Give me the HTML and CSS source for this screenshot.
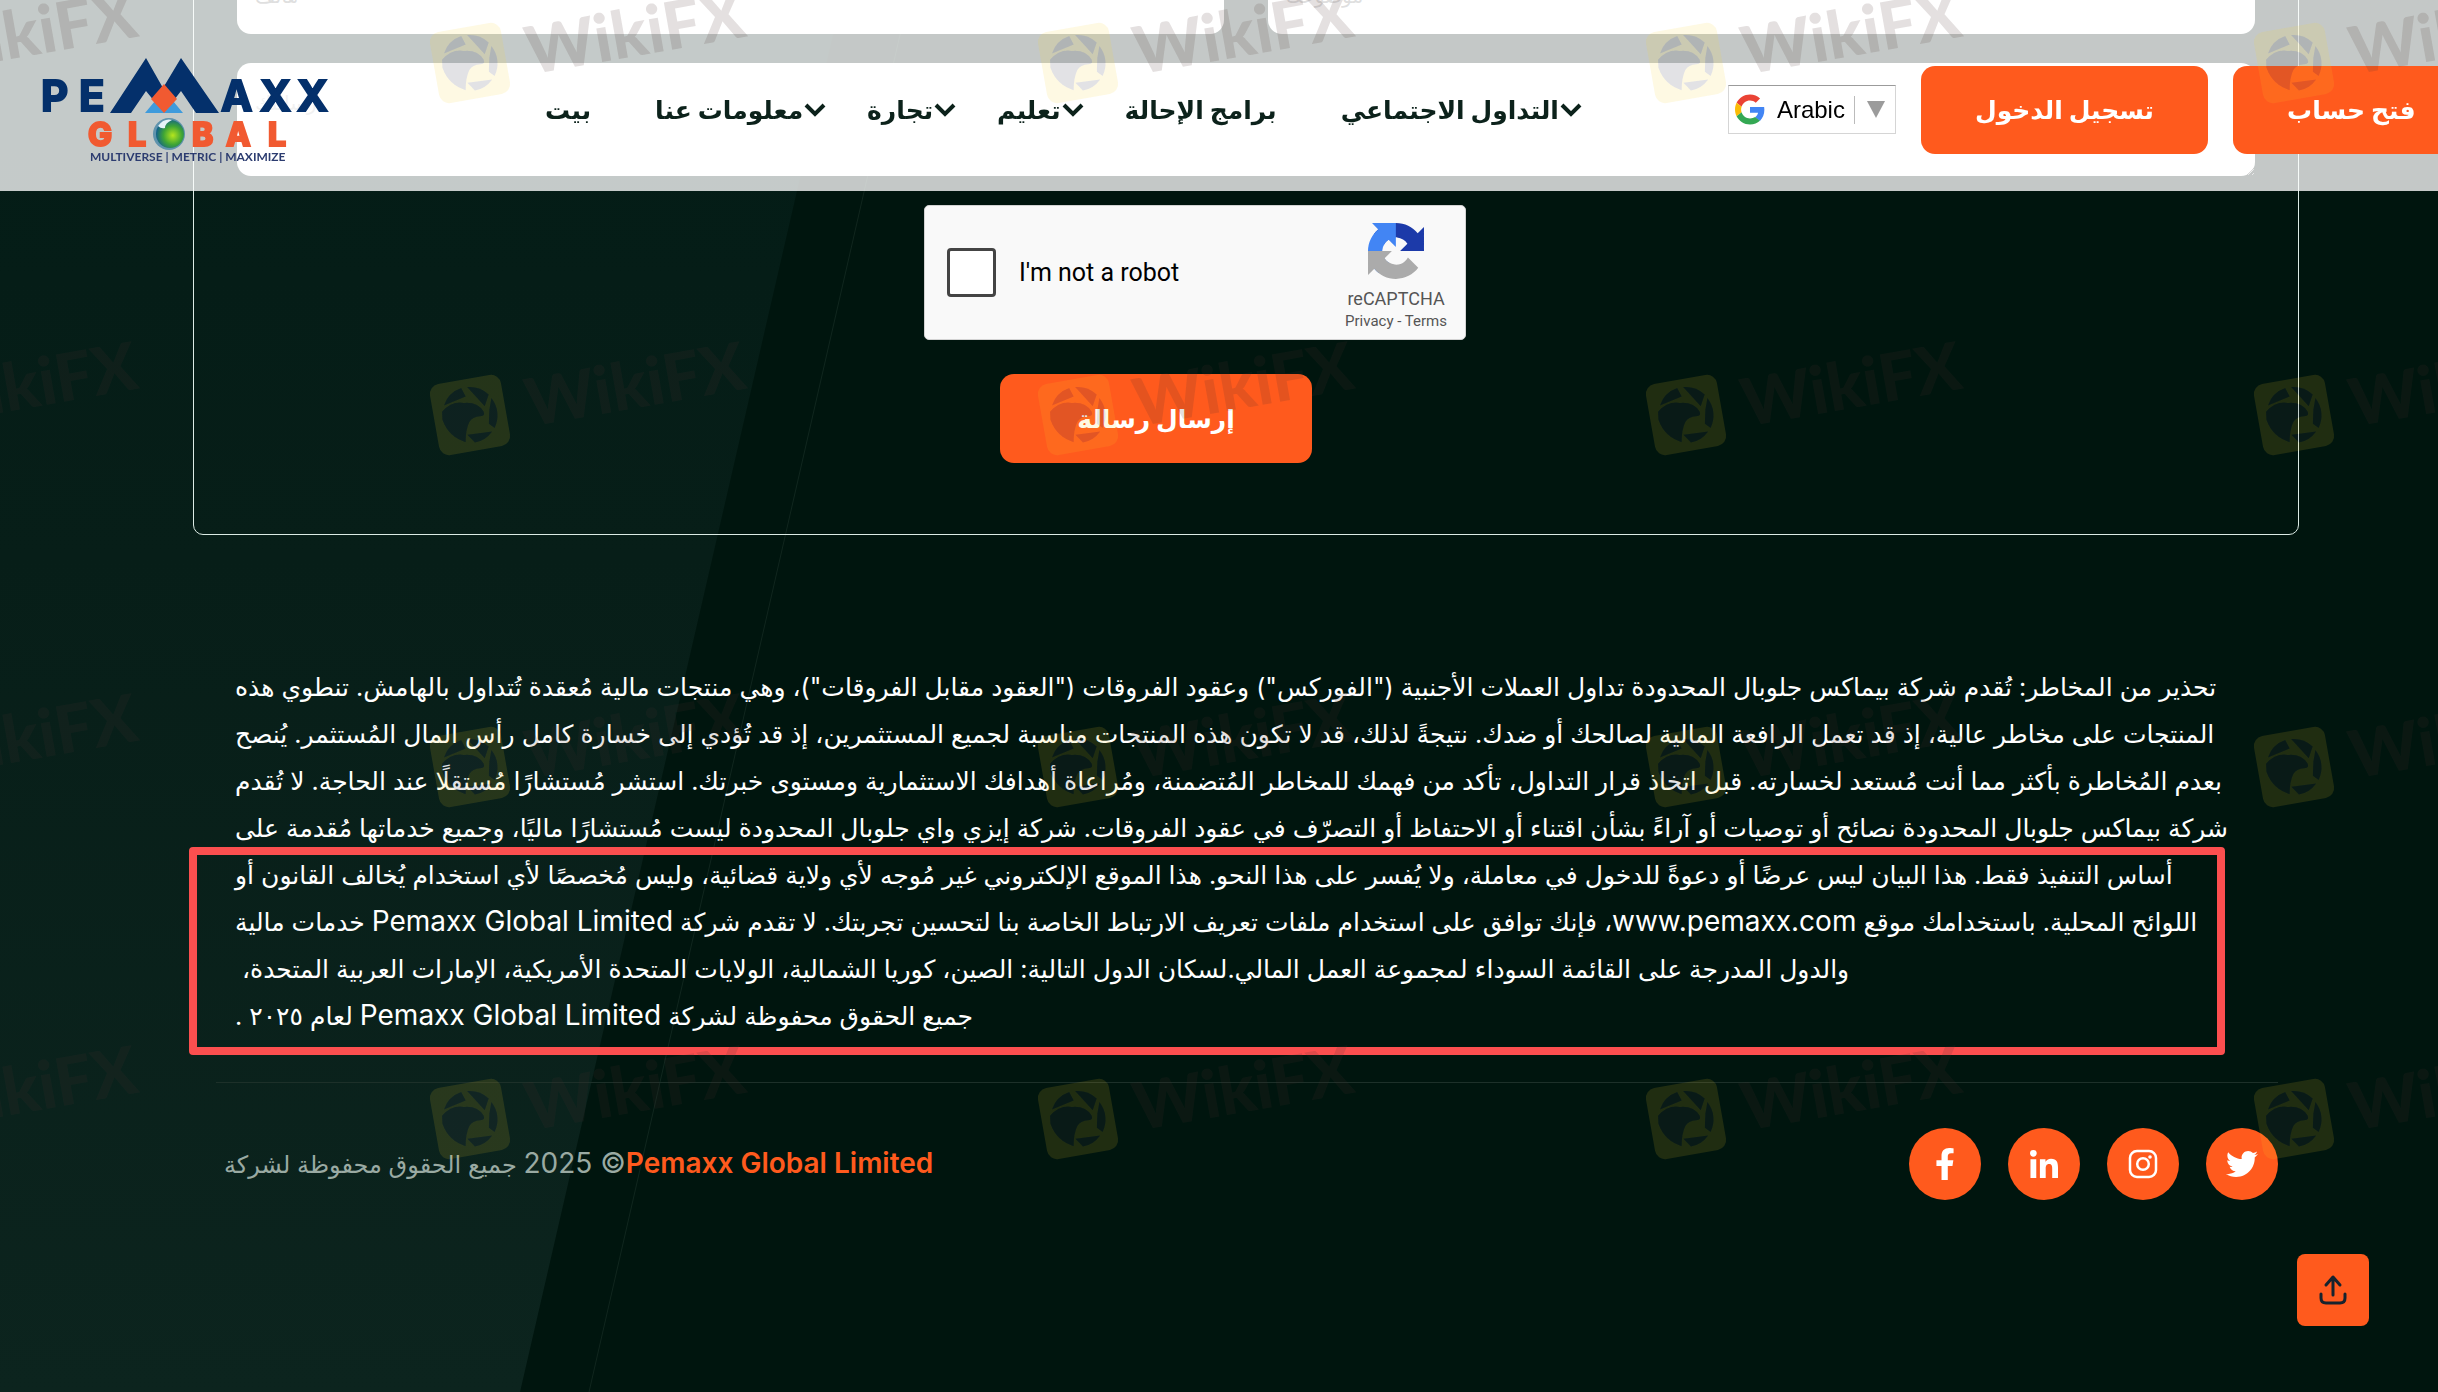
FILE: index.html
```
<!DOCTYPE html>
<html lang="ar">
<head>
  <meta charset="UTF-8" />
  <meta name="viewport" content="width=device-width, initial-scale=1.0" />
  <title>Pemaxx Global Limited</title>
  <link rel="stylesheet" href="styles.css">
</head>
<body>
  <svg class="page-bg" viewBox="0 0 2438 1392" preserveAspectRatio="none" aria-hidden="true">
    <defs>
      <linearGradient id="panel" x1="0" y1="0" x2="0" y2="1">
        <stop offset="0" stop-color="#031c16" />
        <stop offset="0.4" stop-color="#071e18" />
        <stop offset="1" stop-color="#0c241e" />
      </linearGradient>
    </defs>
    <path fill="url(#panel)" d="M0 0H841L520 1392H0Z" />
    <path fill="none" stroke="#10261e" stroke-width="1" d="M908 0L589 1392" />
  </svg>

  <header class="header">
    <a href="#" class="logo" aria-label="Pemaxx Global">
      <svg width="296" height="115" viewBox="0 0 296 115">
        <defs>
          <radialGradient id="globe" cx="0.6" cy="0.55" r="0.6">
            <stop offset="0" stop-color="#b5e61d" />
            <stop offset="0.55" stop-color="#3fa535" />
            <stop offset="1" stop-color="#12618a" />
          </radialGradient>
        </defs>
        <g class="logo-name">
          <text x="5 43" y="59">PE</text>
          <text x="185 224 261" y="59">AXX</text>
        </g>
        <path fill="#04306b" d="M74 61L110 6L127 36L145 6L183 61H160L145 39L128 61L110 39L95 61Z" />
        <path fill="#3f9bdc" d="M109 61L119 49L128 61L137 49L147 61Z" />
        <path fill="#f15a31" d="M128 32L141 47L128 61L115 47Z" />
        <g class="logo-global">
          <text x="52 92" y="94">GL</text>
          <text x="156 190 232" y="94">BAL</text>
        </g>
        <circle cx="133" cy="82" r="16" fill="#5f93ad" />
        <circle cx="134" cy="82" r="14" fill="url(#globe)" />
        <path fill="#e6f3f8" d="M122 74q6-8 14-6q-7 3-7 8q-4 1-7-2z" />
        <text class="logo-tag" x="54" y="109">MULTIVERSE | METRIC | MAXIMIZE</text>
      </svg>
    </a>

    <nav class="nav">
      <a href="#" class="nav-single">بيت</a>
      <a href="#">معلومات عنا<svg viewBox="0 0 24 14"><path d="M3 2l9 9 9-9" /></svg></a>
      <a href="#">تجارة<svg viewBox="0 0 24 14"><path d="M3 2l9 9 9-9" /></svg></a>
      <a href="#">تعليم<svg viewBox="0 0 24 14"><path d="M3 2l9 9 9-9" /></svg></a>
      <a href="#" class="nav-single">برامج الإحالة</a>
      <a href="#">التداول الاجتماعي<svg viewBox="0 0 24 14"><path d="M3 2l9 9 9-9" /></svg></a>
    </nav>

    <div class="actions">
      <button type="button" class="lang">
        <svg width="30" height="31" viewBox="0 0 48 48">
          <path fill="#ea4335" d="M24 9.500c3.540 0 6.710 1.220 9.210 3.600l6.850-6.850C35.900 2.380 30.470 0 24 0 14.620 0 6.510 5.380 2.560 13.220l7.980 6.190C12.430 13.720 17.740 9.500 24 9.500z" />
          <path fill="#4285f4" d="M46.980 24.550c0-1.570-.15-3.090-.38-4.550H24v9.020h12.940c-.58 2.960-2.260 5.480-4.780 7.180l7.730 6c4.510-4.180 7.090-10.360 7.090-17.650z" />
          <path fill="#fbbc05" d="M10.530 28.590c-.48-1.450-.76-2.990-.76-4.590s.27-3.140.76-4.590l-7.980-6.190C.92 16.460 0 20.120 0 24s.92 7.540 2.560 10.780l7.970-6.190z" />
          <path fill="#34a853" d="M24 48c6.480 0 11.930-2.130 15.890-5.810l-7.730-6c-2.150 1.450-4.920 2.300-8.160 2.300-6.260 0-11.570-4.220-13.470-9.910l-7.980 6.190C6.510 42.620 14.620 48 24 48z" />
        </svg>
        <span class="lang-name">Arabic</span>
        <span class="lang-arrow"></span>
      </button>
      <a href="#" class="btn">تسجيل الدخول</a>
      <a href="#" class="btn">فتح حساب</a>
    </div>
  </header>

  <main class="main">
    <form class="contact">
      <div class="row">
        <input type="text" placeholder="هاتف" aria-label="هاتف" />
        <input type="text" placeholder="موضوعك" aria-label="موضوعك" />
      </div>
      <textarea placeholder="رسالتك" aria-label="رسالتك"></textarea>

      <div class="submit-area">
        <div class="captcha">
          <input type="checkbox" id="robot" />
          <label for="robot">I'm not a robot</label>
          <div class="captcha-brand">
            <svg width="56" height="56" viewBox="0 0 64 64">
              <path fill="#1c3aa9" d="M64 31.955l-.033-1.370V4.687l-7.160 7.160C50.948 4.674 42.033.093 32.050.093c-10.400 0-19.622 4.960-25.458 12.640l11.736 11.860a15.550 15.550 0 0 1 4.754-5.334c2.050-1.600 4.952-2.906 8.968-2.906.485 0 .860.057 1.135.163 4.976.393 9.288 3.140 11.828 7.124l-8.307 8.307L64 31.953" />
              <path fill="#4285f4" d="M31.862.094l-1.370.033H4.594l7.160 7.160C4.580 13.147 0 22.060 0 32.046c0 10.400 4.960 19.622 12.640 25.458L24.500 45.768a15.550 15.550 0 0 1-5.334-4.754c-1.600-2.050-2.906-4.952-2.906-8.968 0-.485.057-.860.163-1.135.393-4.976 3.140-9.288 7.124-11.828l8.307 8.307L31.860.095" />
              <path fill="#ababab" d="M.001 32.045l.033 1.370v25.898l7.160-7.160c5.860 7.173 14.774 11.754 24.760 11.754 10.400 0 19.622-4.960 25.458-12.640l-11.736-11.860a15.550 15.550 0 0 1-4.754 5.334c-2.050 1.600-4.952 2.906-8.968 2.906-.485 0-.860-.057-1.135-.163-4.976-.393-9.288-3.140-11.828-7.124l8.307-8.307c-10.522.040-22.400.066-27.295-.005" />
            </svg>
            <span class="captcha-name">reCAPTCHA</span>
            <span class="captcha-links"><a href="#">Privacy</a> - <a href="#">Terms</a></span>
          </div>
        </div>
        <button type="submit" class="btn btn-submit">إرسال رسالة</button>
      </div>
    </form>

    <footer class="footer">
      <div class="risk">
        <p dir="rtl">
          تحذير من المخاطر: تُقدم شركة بيماكس جلوبال المحدودة تداول العملات الأجنبية ("الفوركس") وعقود الفروقات ("العقود مقابل الفروقات")، وهي منتجات مالية مُعقدة تُتداول بالهامش. تنطوي هذه<br>
          المنتجات على مخاطر عالية، إذ قد تعمل الرافعة المالية لصالحك أو ضدك. نتيجةً لذلك، قد لا تكون هذه المنتجات مناسبة لجميع المستثمرين، إذ قد تُؤدي إلى خسارة كامل رأس المال المُستثمر. يُنصح<br>
          بعدم المُخاطرة بأكثر مما أنت مُستعد لخسارته. قبل اتخاذ قرار التداول، تأكد من فهمك للمخاطر المُتضمنة، ومُراعاة أهدافك الاستثمارية ومستوى خبرتك. استشر مُستشارًا مُستقلًا عند الحاجة. لا تُقدم<br>
          شركة بيماكس جلوبال المحدودة نصائح أو توصيات أو آراءً بشأن اقتناء أو الاحتفاظ أو التصرّف في عقود الفروقات. شركة إيزي واي جلوبال المحدودة ليست مُستشارًا ماليًا، وجميع خدماتها مُقدمة على<br>
          أساس التنفيذ فقط. هذا البيان ليس عرضًا أو دعوةً للدخول في معاملة، ولا يُفسر على هذا النحو. هذا الموقع الإلكتروني غير مُوجه لأي ولاية قضائية، وليس مُخصصًا لأي استخدام يُخالف القانون أو<br>
          اللوائح المحلية. باستخدامك موقع <span class="latin">www.pemaxx.com</span>، فإنك توافق على استخدام ملفات تعريف الارتباط الخاصة بنا لتحسين تجربتك. لا تقدم شركة <span class="latin">Pemaxx Global Limited</span> خدمات مالية<br>
          والدول المدرجة على القائمة السوداء لمجموعة العمل المالي.لسكان الدول التالية: الصين، كوريا الشمالية، الولايات المتحدة الأمريكية، الإمارات العربية المتحدة،&nbsp;<br>
          جميع الحقوق محفوظة لشركة <span class="latin">Pemaxx Global Limited</span> لعام ٢٠٢٥ .
        </p>
        <div class="highlight"></div>
      </div>

      <div class="footer-bottom">
        <p class="copyright"><bdi>جميع الحقوق محفوظة لشركة</bdi> <span class="latin">2025 ©<a href="#">Pemaxx Global Limited</a></span></p>
        <div class="social">
          <a href="#" aria-label="Facebook"><svg width="20" height="32" viewBox="0 0 320 512"><path d="M279.140 288l14.220-92.660h-88.910v-60.130c0-25.350 12.420-50.060 52.240-50.060h40.420V6.260S260.430 0 225.360 0c-73.220 0-121.080 44.380-121.080 124.720v70.620H22.890V288h81.390v224h100.170V288z" /></svg></a>
          <a href="#" aria-label="LinkedIn"><svg width="28" height="28" viewBox="0 0 448 448"><path d="M100.280 448H7.400V148.900h92.880zM53.790 108.100C24.090 108.100 0 83.500 0 53.800a53.790 53.790 0 0 1 107.580 0c0 29.700-24.100 54.300-53.790 54.300zM447.900 448h-92.680V302.400c0-34.700-.7-79.200-48.290-79.200-48.290 0-55.690 37.700-55.690 76.700V448h-92.780V148.900h89.080v40.800h1.300c12.400-23.500 42.690-48.300 87.880-48.300 94 0 111.280 61.900 111.280 142.300V448z" /></svg></a>
          <a href="#" aria-label="Instagram"><svg width="30" height="30" viewBox="0 0 30 30"><rect x="2" y="2" width="26" height="26" rx="7" fill="none" stroke="#fff" stroke-width="2.500" /><circle cx="15" cy="15" r="5.800" fill="none" stroke="#fff" stroke-width="2.500" /><circle cx="22" cy="8" r="1.800" /></svg></a>
          <a href="#" aria-label="Twitter"><svg width="32" height="32" viewBox="0 0 512 512"><path d="M459.370 151.716c.325 4.548.325 9.097.325 13.645 0 138.720-105.583 298.558-298.558 298.558-59.452 0-114.680-17.219-161.137-47.106 8.447.974 16.568 1.299 25.340 1.299 49.055 0 94.213-16.568 130.274-44.832-46.132-.975-84.792-31.188-98.112-72.772 6.498.974 12.995 1.624 19.818 1.624 9.421 0 18.843-1.300 27.614-3.573-48.081-9.747-84.143-51.980-84.143-102.985v-1.299c13.969 7.797 30.214 12.670 47.431 13.319-28.264-18.843-46.781-51.005-46.781-87.391 0-19.492 5.197-37.360 14.294-52.954 51.655 63.675 129.300 105.258 216.365 109.807-1.624-7.797-2.599-15.918-2.599-24.040 0-57.828 46.782-104.934 104.934-104.934 30.213 0 57.502 12.670 76.670 33.137 23.715-4.548 46.456-13.320 66.599-25.340-7.798 24.366-24.366 44.833-46.132 57.827 21.117-2.273 41.584-8.122 60.426-16.243-14.292 20.791-32.161 39.308-52.628 54.253z" /></svg></a>
        </div>
      </div>
    </footer>
  </main>

  <button type="button" class="to-top" aria-label="أعلى">
    <svg width="28" height="32" viewBox="0 0 28 32"><path d="M14 21V4M7 11l7-8 7 8M2 20v4q0 5 5 5h14q5 0 5-5v-4" /></svg>
  </button>

  <svg class="watermark" aria-hidden="true">
    <defs>
      <g id="eagle">
        <path d="M-24-14A28 28 0 0 1-4-28L-1-19Z" />
        <path d="M2-28A28 28 0 0 1 22-17L16-6Z" />
        <path d="M24-13A28 28 0 0 1 22 17L17 12L20-2Z" />
        <path d="M19 20A28 28 0 0 1 0 28L-6 19Z" />
        <path d="M-27-8Q-16-17-4-13Q10-12 14-1Q15 4 10 3Q2 2-2 7Q-7 14-9 26Q-25 18-28 0Z" />
      </g>
      <mask id="cut" maskUnits="userSpaceOnUse" x="-40" y="-40" width="80" height="80">
        <rect x="-40" y="-40" width="80" height="80" fill="#fff" />
        <use href="#eagle" fill="#000" />
      </mask>
      <g id="mark">
        <g transform="rotate(-10)">
          <rect class="badge" x="-36" y="-36" width="72" height="72" rx="10" mask="url(#cut)" />
          <use class="bird" href="#eagle" />
          <text x="57" y="22">WikiFX</text>
        </g>
      </g>
      <pattern id="tile" width="608" height="352" patternUnits="userSpaceOnUse" patternTransform="translate(331 -138)">
        <use href="#mark" x="139" y="201" />
      </pattern>
    </defs>
    <rect width="100%" height="100%" fill="url(#tile)" />
  </svg>
</body>
</html>
```
FILE: styles.css
```
* {
  box-sizing: border-box;
}

body {
  margin: 0;
  min-height: 100vh;
  display: flex;
  flex-direction: column;
  overflow: hidden;
  background-color: #00150e;
  color: white;
  font-family: Inter, "DejaVu Sans", sans-serif;
}

a {
  color: inherit;
  text-decoration: none;
}

.page-bg {
  position: absolute;
  inset: 0;
  width: 100%;
  height: 100%;
  z-index: -1;
}

/* header */
.header {
  position: fixed;
  top: 0;
  left: 0;
  right: 0;
  z-index: 10;
  height: 191px;
  padding: 28px 0 0 36px;
  display: flex;
  align-items: center;
  background-color: rgba(255, 255, 255, 0.77);
}

.logo svg {
  display: block;
}

.logo-name {
  font: 700 42px Inter, sans-serif;
  fill: #04306b;
  stroke: #04306b;
  stroke-width: 2;
}

.logo-global {
  font: 800 32px Inter, sans-serif;
  fill: #f15a31;
  stroke: #f15a31;
  stroke-width: 2;
}

.logo-tag {
  font: 700 12px Lato, sans-serif;
  fill: #2c3c70;
}

.nav {
  display: flex;
  gap: 40px;
  margin-left: 213px;
  color: #0c221b;
  font-size: 25px;
  font-weight: bold;
  white-space: nowrap;
}

.nav a {
  display: flex;
  align-items: center;
}

.nav .nav-single {
  margin-right: 24px;
}

.nav svg {
  width: 24px;
  height: 14px;
  fill: none;
  stroke: #0c221b;
  stroke-width: 4;
}

.actions {
  display: flex;
  align-items: center;
  gap: 25px;
  margin-left: 145px;
  white-space: nowrap;
}

.lang {
  display: flex;
  align-items: center;
  height: 49px;
  padding: 0 10px 0 6px;
  background-color: white;
  border: 1px solid #d5d5d5;
  border-top-color: #9b9b9b;
  font: 24px "Liberation Sans", sans-serif;
  color: black;
}

.lang-name {
  margin-left: 12px;
  padding-right: 9px;
  border-right: 1px solid #bbb;
}

.lang-arrow {
  margin-left: 12px;
  border: 9px solid transparent;
  border-top: 17px solid #9b9b9b;
  border-bottom: 0;
}

.btn {
  display: flex;
  align-items: center;
  justify-content: center;
  height: 88px;
  padding: 0 54px;
  border: 0;
  border-radius: 14px;
  background-color: #ff5a1d;
  color: white;
  font-family: inherit;
  font-size: 25px;
  font-weight: bold;
}

/* contact form */
.main {
  margin-top: -86px;
  padding: 0 139px 0 193px;
}

.contact {
  display: flex;
  flex-direction: column;
  gap: 29px;
  padding: 43px 43px 71px;
  border: 1px solid #dcebe5;
  border-radius: 10px;
}

.row {
  display: flex;
  gap: 44px;
}

.row input,
.contact textarea {
  flex: 1;
  height: 76px;
  padding: 0 18px;
  border: 0;
  border-radius: 14px;
  background-color: white;
  font-family: inherit;
  font-size: 20px;
}

.contact textarea {
  flex: none;
  height: 113px;
  padding: 28px 18px;
}

.contact textarea::placeholder {
  color: #c4c4c4;
}

.submit-area {
  width: 644px;
  align-self: center;
}

.captcha {
  display: flex;
  align-items: center;
  width: 542px;
  height: 135px;
  padding: 0 18px 0 22px;
  border: 1px solid #d3d3d3;
  border-radius: 5px;
  background-color: #f9f9f9;
  color: black;
  font-family: Roboto, sans-serif;
  font-size: 25px;
}

.captcha input {
  appearance: none;
  width: 49px;
  height: 49px;
  margin: 0 23px 0 0;
  border: 3px solid #444;
  border-radius: 4px;
  background-color: white;
}

.captcha-brand {
  display: flex;
  flex-direction: column;
  align-items: center;
  margin-left: auto;
  padding-top: 8px;
  color: #555;
}

.captcha-name {
  margin-top: 8px;
  font-size: 18px;
  line-height: 24px;
}

.captcha-links {
  font-size: 15px;
  line-height: 20px;
}

.btn-submit {
  width: 312px;
  height: 89px;
  margin: 34px 0 0 76px;
}

/* footer */
.footer {
  padding: 129px 21px 0 23px;
}

.risk {
  position: relative;
  padding: 0 0 42px 19px;
  border-bottom: 1px solid #1d3029;
}

.risk p {
  margin: 0;
  text-align: left;
  white-space: nowrap;
  font-size: 25px;
  line-height: 47px;
}

.latin {
  font-size: 28px;
  line-height: 1;
}

/* last paragraph of the warning is boxed */
.highlight {
  position: absolute;
  top: 183px;
  left: -27px;
  right: 53px;
  bottom: 27px;
  border: 8px solid #fb4f4f;
  border-radius: 4px;
}

.footer-bottom {
  display: flex;
  align-items: center;
  justify-content: space-between;
  padding: 45px 0 0 8px;
}

.copyright {
  margin: 0;
  color: #9aaaa3;
  font-size: 24px;
}

.copyright a {
  color: #ff5a1d;
  font-weight: 600;
}

.social {
  display: flex;
  gap: 27px;
}

.social a {
  display: flex;
  align-items: center;
  justify-content: center;
  width: 72px;
  height: 72px;
  border-radius: 50%;
  background-color: #ff5a1d;
}

.social svg {
  fill: white;
}

.to-top {
  position: fixed;
  right: 69px;
  bottom: 66px;
  display: flex;
  align-items: center;
  justify-content: center;
  width: 72px;
  height: 72px;
  border: 0;
  border-radius: 8px;
  background-color: #ff5a1d;
}

.to-top svg {
  fill: none;
  stroke: #16232e;
  stroke-width: 3;
  stroke-linecap: round;
  stroke-linejoin: round;
}

/* watermark over the whole page */
.watermark {
  position: fixed;
  inset: 0;
  z-index: 20;
  width: 100%;
  height: 100%;
  pointer-events: none;
}

.watermark text {
  font: 900 66px Lato, sans-serif;
  fill: #4b3030;
  fill-opacity: 0.15;
}

.watermark .badge {
  fill: #f5cd28;
  fill-opacity: 0.13;
}

.watermark .bird {
  fill: #3c3c50;
  fill-opacity: 0.15;
}
```
